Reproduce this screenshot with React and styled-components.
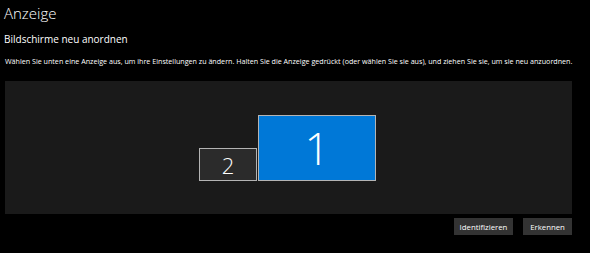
import React from 'react'
import { styled, createGlobalStyle } from 'styled-components'

const displays = [
  { id: 2, left: 194, top: 67, width: 58, height: 33, active: false, fontSize: 22 },
  { id: 1, left: 253, top: 34, width: 118, height: 66, active: true, fontSize: 44 },
]

function App() {
  return (
    <>
      <GlobalStyle />
      <Page>
        <Title>Anzeige</Title>
        <SubTitle>Bildschirme neu anordnen</SubTitle>
        <Description>
          Wählen Sie unten eine Anzeige aus, um ihre Einstellungen zu ändern. Halten Sie die Anzeige gedrückt (oder wählen Sie sie aus), und ziehen Sie sie, um sie neu anzuordnen.
        </Description>
        <Canvas>
          {displays.map((d) => (
            <Monitor
              key={d.id}
              $active={d.active}
              $size={d.fontSize}
              style={{ left: d.left, top: d.top, width: d.width, height: d.height }}
            >
              {d.id}
            </Monitor>
          ))}
        </Canvas>
        <ButtonRow>
          <Button $width={59}>Identifizieren</Button>
          <Button $width={49}>Erkennen</Button>
        </ButtonRow>
      </Page>
    </>
  )
}

const GlobalStyle = createGlobalStyle`
    html, body {
        margin: 0;
        padding: 0;
        background: #000;
    }
    body {
        font-family: "Open Sans", "Noto Sans", sans-serif;
        color: #fff;
    }
`;

const Page = styled.div`
    width: 590px;
    height: 253px;
    padding: 0 18px 0 5px;
    box-sizing: border-box;
    display: flex;
    flex-direction: column;
    overflow: hidden;
`;

const Title = styled.div`
    font-size: 15px;
    font-weight: 300;
    line-height: 20px;
    margin-top: 3px;
    margin-left: -1px;
`;

const SubTitle = styled.div`
    font-size: 10px;
    line-height: 14px;
    margin-top: 9px;
    margin-left: -1px;
`;

const Description = styled.div`
    font-size: 7.15px;
    line-height: 10px;
    margin-top: 10px;
    white-space: nowrap;
`;

const Canvas = styled.div`
    position: relative;
    height: 133px;
    margin-top: 15px;
    background-color: #1a1a1a;
`;

const Monitor = styled.div`
    position: absolute;
    box-sizing: border-box;
    border: 1px solid #b4b4b4;
    background-color: ${(p) => (p.$active ? '#0078d7' : '#2b2b2b')};
    display: flex;
    align-items: center;
    justify-content: center;
    font-size: ${(p) => p.$size}px;
    font-weight: 300;
    color: #fff;
`;

const ButtonRow = styled.div`
    display: flex;
    justify-content: flex-end;
    gap: 10px;
    margin-top: 4px;
`;

const Button = styled.div`
    width: ${(p) => p.$width}px;
    height: 17px;
    background-color: #333;
    display: flex;
    align-items: center;
    justify-content: center;
    font-size: 7.8px;
    color: #fff;
`;

export default App
